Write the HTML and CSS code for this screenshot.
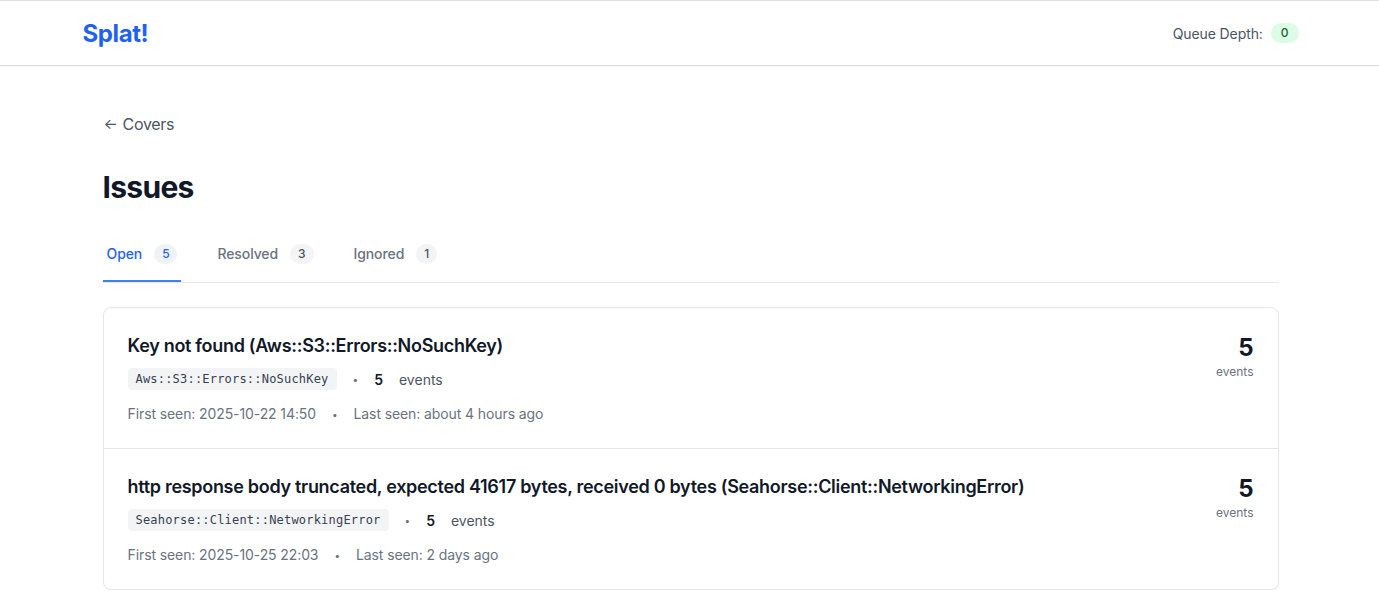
FILE: index.html
```html
<!DOCTYPE html>
<html lang="en">
<head>
<meta charset="utf-8">
<title>Splat! – Issues</title>
<link rel="stylesheet" href="styles.css">
</head>
<body>
<header class="topbar">
  <div class="topbar-inner">
    <a class="logo" href="#">Splat!</a>
    <div class="queue">
      <span class="queue-label">Queue Depth:</span>
      <span class="queue-badge">0</span>
    </div>
  </div>
</header>
<main class="main">
  <a class="back" href="#"><span class="arrow">←</span><span>Covers</span></a>
  <h1 class="title">Issues</h1>
  <nav class="tabs">
    <a class="tab active" href="#">Open <span class="count">5</span></a>
    <a class="tab" href="#">Resolved <span class="count">3</span></a>
    <a class="tab" href="#">Ignored <span class="count">1</span></a>
  </nav>
  <div class="card">
    <div class="issue">
      <div class="issue-body">
        <div class="issue-title">Key not found (Aws::S3::Errors::NoSuchKey)</div>
        <div class="issue-tags">
          <code class="code">Aws::S3::Errors::NoSuchKey</code>
          <span class="dot">•</span>
          <span class="num">5</span>
          <span>events</span>
        </div>
        <div class="issue-meta">
          <span>First seen: 2025-10-22 14:50</span>
          <span class="dot">•</span>
          <span>Last seen: about 4 hours ago</span>
        </div>
      </div>
      <div class="issue-count">
        <div class="big">5</div>
        <div class="small">events</div>
      </div>
    </div>
    <div class="issue">
      <div class="issue-body">
        <div class="issue-title">http response body truncated, expected 41617 bytes, received 0 bytes (Seahorse::Client::NetworkingError)</div>
        <div class="issue-tags">
          <code class="code">Seahorse::Client::NetworkingError</code>
          <span class="dot">•</span>
          <span class="num">5</span>
          <span>events</span>
        </div>
        <div class="issue-meta">
          <span>First seen: 2025-10-25 22:03</span>
          <span class="dot">•</span>
          <span>Last seen: 2 days ago</span>
        </div>
      </div>
      <div class="issue-count">
        <div class="big">5</div>
        <div class="small">events</div>
      </div>
    </div>
  </div>
</main>
</body>
</html>
```

FILE: styles.css
```css
* { box-sizing: border-box; }
html, body { margin: 0; padding: 0; }
body {
  font-family: Inter, "Noto Sans", "Liberation Sans", sans-serif;
  background: #ffffff;
  color: #111827;
  border-top: 1px solid #e0e0e0;
}
a { text-decoration: none; color: inherit; }

.topbar {
  background: #fff;
  height: 64px;
  box-shadow: 0 1px 2px rgba(0,0,0,0.08), 0 1px 0 #e5e7eb;
  position: relative;
}
.topbar-inner {
  max-width: 1280px;
  margin: 0 auto;
  padding: 0 31px 0 33px;
  height: 64px;
  display: flex;
  align-items: center;
  justify-content: space-between;
}
.logo {
  font-size: 24px;
  font-weight: 700;
  color: #1f61f0;
  letter-spacing: -0.4px;
}
.queue { display: flex; align-items: center; gap: 8px; }
.queue-label { font-size: 14px; color: #4b5563; letter-spacing: -0.1px; }
.queue-badge {
  background: #dcfce7;
  color: #166534;
  font-size: 12px;
  font-weight: 500;
  line-height: 16px;
  padding: 2px 10px;
  border-radius: 9999px;
}

.main {
  max-width: 1176px;
  margin: 0 auto;
  padding-top: 47px;
  transform: translateX(1px);
}
.back {
  display: inline-flex;
  align-items: center;
  gap: 5px;
  font-size: 16px;
  line-height: 24px;
  color: #4b5563;
  margin-left: 1px;
  letter-spacing: -0.3px;
}
.arrow { font-size: 15px; }
.title {
  font-size: 30px;
  line-height: 36px;
  font-weight: 700;
  margin: 33px 0 0 0;
  color: #111827;
  letter-spacing: -0.7px;
}
.tabs {
  display: flex;
  gap: 32px;
  margin-top: 39px;
  border-bottom: 1px solid #e5e7eb;
}
.tab {
  display: flex;
  align-items: center;
  gap: 12px;
  padding: 0 4px 16px 4px;
  font-size: 14px;
  line-height: 20px;
  font-weight: 500;
  color: #6b7280;
  border-bottom: 2px solid transparent;
  letter-spacing: -0.1px;
}
.tab.active { color: #2563eb; border-bottom-color: #3b82f6; }
.count {
  background: #f3f4f6;
  color: #4b5563;
  font-size: 12px;
  line-height: 16px;
  padding: 2px 8px;
  border-radius: 9999px;
  font-weight: 500;
}
.tab.active .count { color: #2563eb; background: #eff2f7; }

.card {
  margin-top: 24px;
  border: 1px solid #e5e7eb;
  border-radius: 8px;
  background: #fff;
  box-shadow: 0 1px 2px rgba(0,0,0,0.04);
}
.issue {
  display: flex;
  justify-content: space-between;
  align-items: flex-start;
  padding: 24px;
  border-bottom: 1px solid #e5e7eb;
}
.issue:last-child { border-bottom: none; }
.issue-title {
  font-size: 18px;
  line-height: 28px;
  font-weight: 600;
  color: #111827;
  letter-spacing: -0.3px;
}
.issue-tags {
  display: flex;
  align-items: center;
  gap: 16px;
  margin-top: 8px;
  font-size: 14px;
  color: #4b5563;
}
.code {
  font-family: "DejaVu Sans Mono", "Liberation Mono", monospace;
  font-size: 12px;
  line-height: 16px;
  padding: 3px 8px;
  background: #f3f4f6;
  color: #374151;
  border-radius: 4px;
  letter-spacing: 0.2px;
}
.dot { font-size: 10px; color: #6b7280; }
.num { font-weight: 600; color: #111827; }
.issue-meta {
  display: flex;
  gap: 16px;
  align-items: center;
  margin-top: 14px;
  font-size: 14px;
  line-height: 20px;
  color: #6b7280;
  letter-spacing: -0.1px;
}
.issue-count { text-align: right; }
.big { font-size: 24px; line-height: 32px; font-weight: 700; color: #111827; }
.small { font-size: 12px; line-height: 16px; color: #6b7280; }
```
